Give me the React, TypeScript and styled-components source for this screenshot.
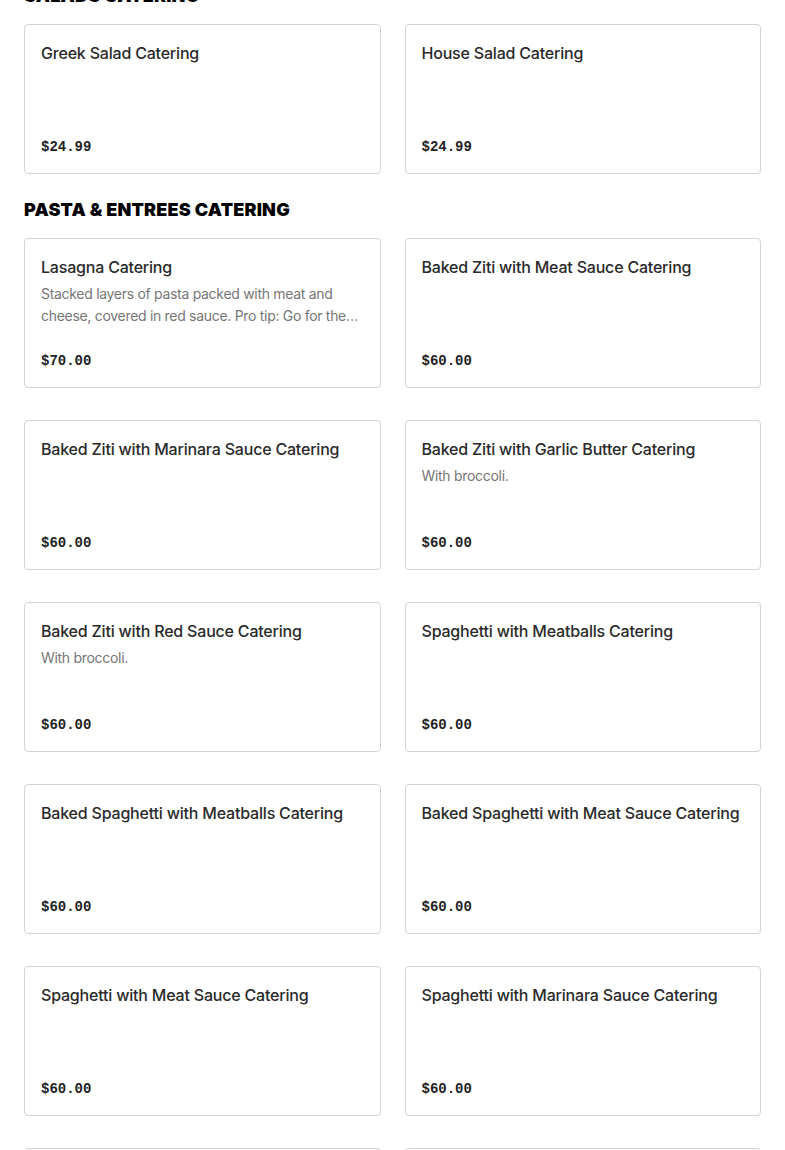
import React from "react";
import styled, { createGlobalStyle } from "styled-components";

const Global = createGlobalStyle`
  html, body { margin: 0; padding: 0; background: #fff; }
  body { font-family: Inter, "Liberation Sans", sans-serif; color: #191919; overflow: hidden; }
  * { box-sizing: border-box; }
`;

const Page = styled.div`
  padding: 0 24px;
  margin-top: -40px;
`;

const Section = styled.section`
  display: flex;
  flex-direction: column;
`;

const Heading = styled.h2`
  margin: 24px 0 16px;
  font-family: Inter, "Liberation Sans", sans-serif;
  font-weight: 900;
  font-size: 18px;
  line-height: 24px;
  letter-spacing: 0.2px;
  color: #000;
  text-transform: uppercase;
`;

const Grid = styled.div`
  display: grid;
  grid-template-columns: 1fr 1fr;
  column-gap: 24px;
  row-gap: 32px;
`;

const Card = styled.div`
  height: 150px;
  border: 1px solid #d4d4d4;
  border-radius: 4px;
  padding: 16px 16px 16px;
  display: flex;
  flex-direction: column;
  background: #fff;
`;

const Title = styled.div`
  font-size: 16px;
  font-weight: 500;
  line-height: 24px;
  letter-spacing: -0.2px;
  color: #2a2a2a;
`;

const Desc = styled.div`
  margin-top: 4px;
  font-size: 14px;
  line-height: 22px;
  letter-spacing: -0.3px;
  color: #767676;
  display: -webkit-box;
  -webkit-line-clamp: 2;
  -webkit-box-orient: vertical;
  overflow: hidden;
`;

const Price = styled.div`
  margin-top: auto;
  font-family: "Liberation Mono", "DejaVu Sans Mono", monospace;
  font-weight: 700;
  font-size: 14px;
  line-height: 20px;
  color: #222;
`;

type Item = { name: string; desc?: string; price: string };

const sections: { title: string; items: Item[] }[] = [
  {
    title: "Salads Catering",
    items: [
      { name: "Greek Salad Catering", price: "$24.99" },
      { name: "House Salad Catering", price: "$24.99" },
    ],
  },
  {
    title: "Pasta & Entrees Catering",
    items: [
      {
        name: "Lasagna Catering",
        desc: "Stacked layers of pasta packed with meat and cheese, covered in red sauce. Pro tip: Go for the meat lasagna for a hearty meal.",
        price: "$70.00",
      },
      { name: "Baked Ziti with Meat Sauce Catering", price: "$60.00" },
      { name: "Baked Ziti with Marinara Sauce Catering", price: "$60.00" },
      { name: "Baked Ziti with Garlic Butter Catering", desc: "With broccoli.", price: "$60.00" },
      { name: "Baked Ziti with Red Sauce Catering", desc: "With broccoli.", price: "$60.00" },
      { name: "Spaghetti with Meatballs Catering", price: "$60.00" },
      { name: "Baked Spaghetti with Meatballs Catering", price: "$60.00" },
      { name: "Baked Spaghetti with Meat Sauce Catering", price: "$60.00" },
      { name: "Spaghetti with Meat Sauce Catering", price: "$60.00" },
      { name: "Spaghetti with Marinara Sauce Catering", price: "$60.00" },
      { name: "Chicken Parmesan Catering", price: "$60.00" },
      { name: "Eggplant Parmesan Catering", price: "$60.00" },
    ],
  },
];

export default function App() {
  return (
    <>
      <Global />
      <Page>
        {sections.map((s) => (
          <Section key={s.title}>
            <Heading>{s.title}</Heading>
            <Grid>
              {s.items.map((it) => (
                <Card key={it.name}>
                  <Title>{it.name}</Title>
                  {it.desc && <Desc>{it.desc}</Desc>}
                  <Price>{it.price}</Price>
                </Card>
              ))}
            </Grid>
          </Section>
        ))}
      </Page>
    </>
  );
}
